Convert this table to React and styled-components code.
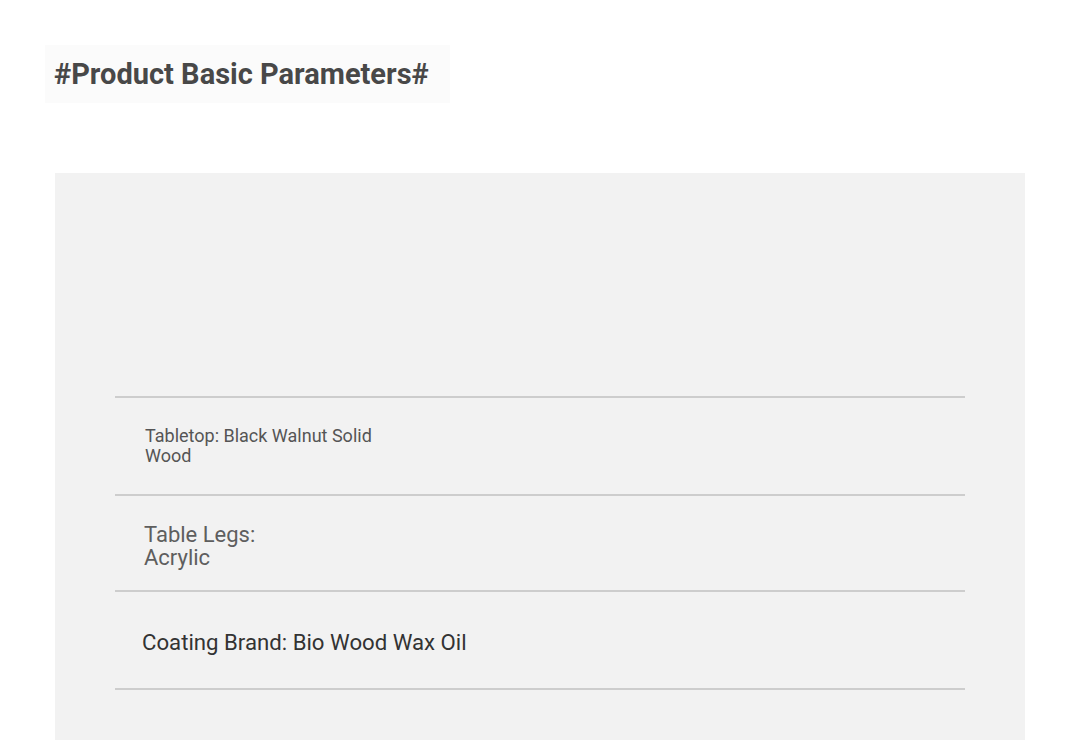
import styled, { createGlobalStyle } from "styled-components";

const GlobalStyle = createGlobalStyle`
  body {
    margin: 0;
    background: #ffffff;
    font-family: Roboto, "Liberation Sans", sans-serif;
  }
`;

const Page = styled.div`
  width: 1080px;
  height: 753px;
  box-sizing: border-box;
  padding: 45px 0 0 45px;
  overflow: hidden;
`;

const TitleBox = styled.div`
  width: 405px;
  height: 58px;
  box-sizing: border-box;
  padding: 12px 0 0 9px;
  background: #fbfbfb;
`;

const Title = styled.h2`
  margin: 0;
  font-size: 29px;
  line-height: 34px;
  font-weight: 700;
  color: #484848;
`;

const Panel = styled.section`
  margin: 70px 0 0 10px;
  width: 970px;
  height: 567px;
  box-sizing: border-box;
  background: #f2f2f2;
  padding: 223px 60px 0;
  display: flex;
  flex-direction: column;
`;

const Row = styled.div`
  height: ${(p) => p.$h}px;
  box-sizing: border-box;
  border-top: 2px solid #cdcdcd;
  padding: ${(p) => p.$pt}px 0 0 ${(p) => p.$pl}px;
  &:last-child {
    border-bottom: 2px solid #cdcdcd;
  }
`;

const Value = styled.div`
  display: inline-block;
  max-width: ${(p) => p.$max}px;
  font-size: ${(p) => p.$size}px;
  line-height: ${(p) => p.$lh}px;
  color: ${(p) => p.$color};
  font-weight: 400;
`;

const rows = [
  { text: "Tabletop: Black Walnut Solid Wood", h: 98, pt: 28, pl: 30, size: 18, lh: 20, color: "#555555", max: 250 },
  { text: "Table Legs: Acrylic", h: 96, pt: 27, pl: 29, size: 22, lh: 23, color: "#5e5e5e", max: 130 },
  { text: "Coating Brand: Bio Wood Wax Oil", h: 100, pt: 37, pl: 27, size: 22.2, lh: 26, color: "#333333", max: 400 },
];

export default function App() {
  return (
    <>
      <GlobalStyle />
      <Page>
        <TitleBox>
          <Title>#Product Basic Parameters#</Title>
        </TitleBox>
        <Panel>
          {rows.map((r) => (
            <Row key={r.text} $h={r.h} $pt={r.pt} $pl={r.pl}>
              <Value $size={r.size} $lh={r.lh} $color={r.color} $max={r.max}>
                {r.text}
              </Value>
            </Row>
          ))}
        </Panel>
      </Page>
    </>
  );
}
